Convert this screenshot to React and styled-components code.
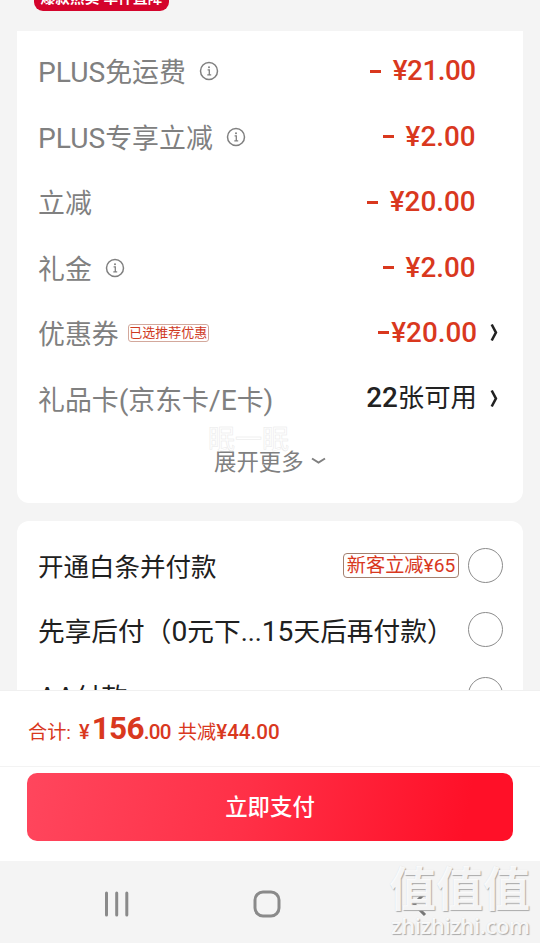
import React from "react";
import styled, { createGlobalStyle } from "styled-components";

const GlobalStyle = createGlobalStyle`
  * { box-sizing: border-box; }
  body {
    margin: 0;
    background: #f4f4f4;
    font-family: Roboto, "Noto Sans CJK SC", sans-serif;
    overflow: hidden;
  }
`;

const Screen = styled.div`
  position: relative;
  display: flex;
  flex-direction: column;
  width: 540px;
  height: 943px;
  overflow: hidden;
  background: #f4f4f4;
`;

const Content = styled.main`
  height: 690px;
  padding: 0 17px;
  overflow: hidden;
`;

const PromoStrip = styled.div`
  display: flex;
  align-items: flex-end;
  height: 11px;
  padding-left: 17px;
`;

const PromoTag = styled.span`
  flex: none;
  width: 135px;
  height: 24px;
  border-radius: 9px;
  background: #d4042c;
  color: #fff;
  font-size: 14.6px;
  font-weight: 700;
  letter-spacing: 0.2px;
  line-height: 23px;
  text-align: center;
  white-space: nowrap;
`;

const Card = styled.section`
  display: flex;
  flex-direction: column;
  background: #fff;
`;

const PriceCard = styled(Card)`
  height: 472px;
  margin-top: 20px;
  padding: 9px 21px 0;
  border-radius: 0 0 12px 12px;
`;

const PayCard = styled(Card)`
  height: 220px;
  margin-top: 18px;
  padding: 12px 20px 0 21px;
  border-radius: 12px;
`;

const Row = styled.div`
  display: flex;
  flex: none;
  align-items: center;
  justify-content: space-between;
  height: ${(p) => p.$height}px;
`;

const Label = styled.span`
  display: flex;
  align-items: center;
  padding-top: 1px;
  color: #808080;
  font-size: 26.9px;
  line-height: 36px;
  white-space: nowrap;
`;

const Latin = styled.span`
  font-size: 28.2px;
`;

const InfoSvg = styled.svg`
  width: 20px;
  height: 20px;
  margin-left: 13px;
  margin-top: -4px;
`;

const CouponTag = styled.span`
  display: flex;
  align-items: center;
  justify-content: center;
  width: 81px;
  height: 18px;
  margin: -4px 0 0 9px;
  border: 1px solid #d3a89c;
  border-radius: 3px;
  color: #cf3a1f;
  font-size: 13px;
  line-height: 16px;
`;

const Value = styled.span`
  display: flex;
  align-items: center;
  margin-right: ${(p) => (p.$linked ? 4 : 26.5)}px;
  padding-bottom: ${(p) => (p.$linked ? 4 : 3)}px;
  color: ${(p) => (p.$dark ? "#222" : "#d9381e")};
  font-size: 27.8px;
  font-weight: 500;
  letter-spacing: ${(p) => p.$tracking || 0}px;
  line-height: 36px;
  white-space: pre;
`;

const Units = styled.span`
  font-size: 26.4px;
  font-weight: 400;
`;

const Minus = styled.i`
  width: 11px;
  height: 3px;
  margin-right: ${(p) => p.$gap}px;
  background: currentColor;
`;

const ArrowSvg = styled.svg`
  width: 8px;
  height: 19px;
  margin-left: 13px;
  color: #222;
`;

const ExpandButton = styled.button`
  display: flex;
  align-items: center;
  align-self: flex-start;
  margin: 13px 0 0 176px;
  padding: 0;
  border: 0;
  background: none;
  color: #808080;
  font: 22.4px/32px Roboto, "Noto Sans CJK SC", sans-serif;
`;

const DownSvg = styled.svg`
  width: 15px;
  height: 8px;
  margin: -2px 0 0 7px;
`;

const PayLabel = styled(Label)`
  padding-top: ${(p) => p.$drop || 4}px;
  color: #202020;
  font-size: ${(p) => p.$size}px;
`;

const PayChoice = styled.span`
  display: flex;
  align-items: center;
  gap: 9px;
`;

const OfferTag = styled.span`
  display: flex;
  align-items: center;
  justify-content: center;
  width: 116px;
  height: 25px;
  padding-top: 2px;
  border: 1px solid #a3806f;
  border-radius: 4px;
  color: #d9381e;
  font-size: 19.2px;
  line-height: 24px;
  white-space: nowrap;
`;

const Radio = styled.span`
  width: 35px;
  height: 35px;
  border: 1.5px solid #8c8c8c;
  border-radius: 50%;
`;

const TotalBar = styled.div`
  display: flex;
  align-items: baseline;
  height: 77px;
  padding: 16px 27px 0 28px;
  border-top: 1px solid #f0f0f0;
  border-bottom: 1px solid #f3f3f3;
  background: #fff;
  color: #d9381e;
  font-size: 19.2px;
  line-height: 44px;
  white-space: pre;
`;

const Yen = styled.span`
  margin: 0 2px 0 8px;
  font-size: 20px;
  font-weight: 500;
`;

const Integer = styled.span`
  font-size: 31.5px;
  font-weight: 700;
  letter-spacing: -0.7px;
`;

const Cents = styled.span`
  font-size: 20.6px;
  font-weight: 500;
`;

const SmallCents = styled(Cents)`
  letter-spacing: -0.7px;
`;

const Discount = styled.span`
  margin-left: 7px;
`;

const ActionBar = styled.div`
  height: 94px;
  padding: 6px 27px 0;
  background: #fff;
`;

const PayButton = styled.button`
  display: block;
  width: 486px;
  height: 68px;
  padding: 0;
  border: 0;
  border-radius: 10px;
  background: linear-gradient(100deg, #ff465d 0%, #ff3047 45%, #ff1028 90%);
  color: #fff;
  font: 500 22.4px/32px Roboto, "Noto Sans CJK SC", sans-serif;
`;

const SystemNav = styled.nav`
  display: flex;
  align-items: center;
  height: 82px;
  padding: 3px 0 0 104px;
  background: #f4f4f4;
`;

const RecentSvg = styled.svg`
  width: 26px;
  height: 26px;
`;

const HomeSvg = styled.svg`
  width: 28px;
  height: 28px;
  margin-left: 123px;
`;

const BackSvg = styled.svg`
  width: 16px;
  height: 26px;
  margin-left: 130px;
`;

const SiteMark = styled.div`
  position: absolute;
  left: 389px;
  top: 861px;
  color: rgba(255, 255, 255, 0.9);
  text-shadow: 1px 1px 1px #aaa, 0 0 1px #ddd;
  white-space: nowrap;
`;

const SiteName = styled.div`
  font: 700 47px/50px "Noto Sans CJK SC", sans-serif;
`;

const SiteUrl = styled.div`
  padding-left: 2px;
  font: 600 22px/28px "Open Sans", sans-serif;
  letter-spacing: -0.35px;
`;

const FaintMark = styled.div`
  position: absolute;
  left: 208px;
  top: 420px;
  color: #fff;
  font: 27px/36px "Noto Sans CJK SC", sans-serif;
  -webkit-text-stroke: 0.5px #e8e8e8;
`;

const InfoIcon = () => (
  <InfoSvg viewBox="0 0 20 20" fill="none" stroke="#808080">
    <circle cx="10" cy="10" r="8.5" strokeWidth="1.5" />
    <path d="M8.6 8.9h1.7v4.8M8.3 13.9h3.9" strokeWidth="1.3" />
    <circle cx="10" cy="6.2" r="1" fill="#808080" stroke="none" />
  </InfoSvg>
);

const ArrowIcon = () => (
  <ArrowSvg viewBox="0 0 8 19" fill="none" stroke="currentColor" strokeWidth="2.6">
    <path d="M1.7 1.5 5.9 9.5 1.7 17.5" />
  </ArrowSvg>
);

const prices = [
  { latin: "PLUS", label: "免运费", info: true, value: "¥21.00", gap: 12, tracking: -0.5 },
  { latin: "PLUS", label: "专享立减", info: true, value: "¥2.00", gap: 12 },
  { label: "立减", value: "¥20.00", gap: 12 },
  { label: "礼金", info: true, value: "¥2.00", gap: 12 },
  { label: "优惠券", tag: "已选推荐优惠", value: "¥20.00", gap: 2, linked: true },
];

export default function App() {
  return (
    <Screen>
      <GlobalStyle />
      <Content>
        <PromoStrip>
          <PromoTag>爆款热卖 单件直降</PromoTag>
        </PromoStrip>
        <PriceCard>
          {prices.map((p) => (
            <Row key={p.label} $height={65.5}>
              <Label>
                {p.latin && <Latin>{p.latin}</Latin>}
                {p.label}
                {p.info && <InfoIcon />}
                {p.tag && <CouponTag>{p.tag}</CouponTag>}
              </Label>
              <Value $linked={p.linked} $tracking={p.tracking}>
                <Minus $gap={p.gap} />
                {p.value}
                {p.linked && <ArrowIcon />}
              </Value>
            </Row>
          ))}
          <Row $height={65.5}>
            <Label>
              礼品卡<Latin>(</Latin>京东卡<Latin>/E</Latin>卡<Latin>)</Latin>
            </Label>
            <Value $linked $dark>
              22<Units>张可用</Units>
              <ArrowIcon />
            </Value>
          </Row>
          <ExpandButton>
            展开更多
            <DownSvg viewBox="0 0 15 8" fill="none" stroke="#808080" strokeWidth="2">
              <path d="M1 1.5 7.5 5.5 14 1.5" />
            </DownSvg>
          </ExpandButton>
        </PriceCard>
        <PayCard>
          <Row $height={64.5}>
            <PayLabel $size={25.5}>开通白条并付款</PayLabel>
            <PayChoice>
              <OfferTag>新客立减¥65</OfferTag>
              <Radio />
            </PayChoice>
          </Row>
          <Row $height={64.5}>
            <PayLabel $size={26.7}>
              先享后付（<Latin>0</Latin>元下...<Latin>15</Latin>天后再付款）
            </PayLabel>
            <Radio />
          </Row>
          <Row $height={64.5}>
            <PayLabel $size={26.4} $drop={8}>
              <Latin>AA</Latin>付款
            </PayLabel>
            <Radio />
          </Row>
        </PayCard>
      </Content>
      <TotalBar>
        合计:<Yen>¥</Yen>
        <Integer>156</Integer>
        <SmallCents>.00</SmallCents>
        <Discount>
          共减<Cents>¥44.00</Cents>
        </Discount>
      </TotalBar>
      <ActionBar>
        <PayButton>立即支付</PayButton>
      </ActionBar>
      <SystemNav>
        <RecentSvg viewBox="0 0 26 26" stroke="#8a8a8a" strokeWidth="3" strokeLinecap="round">
          <path d="M2.5 2v22M12.7 2v22M22.8 2v22" />
        </RecentSvg>
        <HomeSvg viewBox="0 0 28 28" fill="none" stroke="#8a8a8a" strokeWidth="3">
          <rect x="2" y="2" width="24" height="24" rx="8" />
        </HomeSvg>
        <BackSvg viewBox="0 0 16 26" fill="none" stroke="#777" strokeWidth="3">
          <path d="M14 2 3 13 14 24" />
        </BackSvg>
      </SystemNav>
      <FaintMark>眠一眠</FaintMark>
      <SiteMark>
        <SiteName>值值值</SiteName>
        <SiteUrl>zhizhizhi.com</SiteUrl>
      </SiteMark>
    </Screen>
  );
}
